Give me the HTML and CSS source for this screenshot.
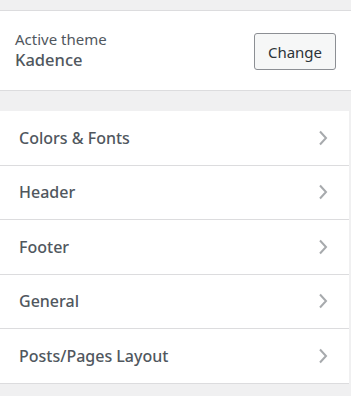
FILE: index.html
```html
<!doctype html>
<html lang="en">
<head>
    <meta charset="UTF-8">
    <title>Customizer</title>
    <link rel="stylesheet" href="styles.css">
</head>
<body>
<div class="panel">
    <div class="theme-info">
        <div class="theme-text">
            <span class="theme-label">Active theme</span>
            <span class="theme-name">Kadence</span>
        </div>
        <button class="btn-change" type="button">Change</button>
    </div>

    <ul class="section-list">
        <li class="section-item">Colors &amp; Fonts
            <svg class="chevron" width="10" height="16" viewBox="0 0 10 16"><polyline points="2,1.5 8,8 2,14.5"/></svg>
        </li>
        <li class="section-item">Header
            <svg class="chevron" width="10" height="16" viewBox="0 0 10 16"><polyline points="2,1.5 8,8 2,14.5"/></svg>
        </li>
        <li class="section-item">Footer
            <svg class="chevron" width="10" height="16" viewBox="0 0 10 16"><polyline points="2,1.5 8,8 2,14.5"/></svg>
        </li>
        <li class="section-item">General
            <svg class="chevron" width="10" height="16" viewBox="0 0 10 16"><polyline points="2,1.5 8,8 2,14.5"/></svg>
        </li>
        <li class="section-item">Posts/Pages Layout
            <svg class="chevron" width="10" height="16" viewBox="0 0 10 16"><polyline points="2,1.5 8,8 2,14.5"/></svg>
        </li>
    </ul>
</div>
</body>
</html>
```

FILE: styles.css
```css
html, body {
    margin: 0;
    padding: 0;
    background-color: #f0f0f1;
}
body {
    font-family: "Noto Sans", "Open Sans", sans-serif;
    color: #50575e;
}
.panel {
    padding-top: 10px;
}
.theme-info {
    display: flex;
    align-items: center;
    justify-content: space-between;
    height: 79px;
    padding: 0 15px;
    background-color: #fff;
    border-top: 1px solid #dcdcde;
    border-bottom: 1px solid #dcdcde;
}
.theme-text {
    display: flex;
    flex-direction: column;
    margin-bottom: 2px;
}
.theme-label {
    font-size: 15px;
    line-height: 20px;
}
.theme-name {
    font-size: 16.5px;
    font-weight: 500;
    line-height: 22px;
}
.btn-change {
    font-family: inherit;
    font-size: 15px;
    color: #2c3338;
    width: 82px;
    height: 37px;
    padding: 0;
    margin-top: 2px;
    background-color: #f6f7f7;
    border: 1px solid #8c8f94;
    border-radius: 3px;
}
.section-list {
    list-style: none;
    margin: 20px 0 0;
    padding: 0;
    width: 349px;
}
.section-item {
    display: flex;
    align-items: center;
    justify-content: space-between;
    height: 53.5px;
    padding: 0 21px 0 19px;
    background-color: #fff;
    border-bottom: 1px solid #dcdcde;
    font-size: 16px;
    font-weight: 500;
}
.chevron {
    fill: none;
    stroke: #a7aaad;
    stroke-width: 2;
}
```
